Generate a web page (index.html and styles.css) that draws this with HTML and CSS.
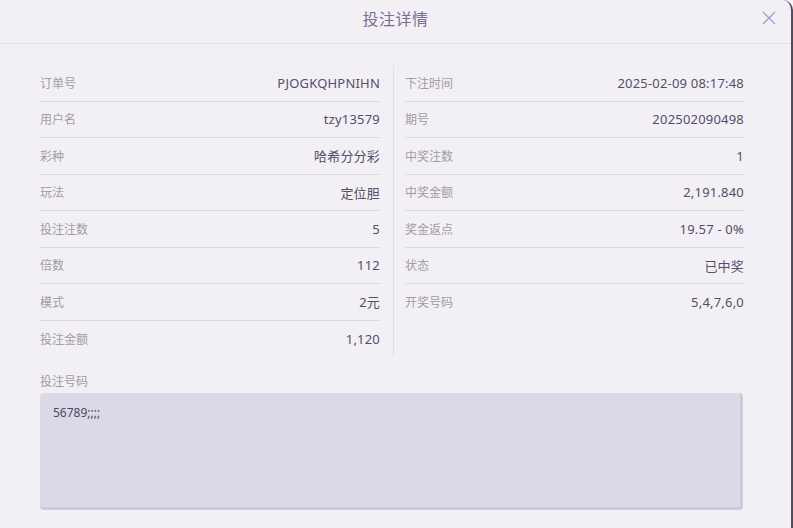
FILE: index.html
```
<!DOCTYPE html>
<html>
	<head>
		<meta charset="UTF-8">
		<title>投注详情</title>
		<link rel="stylesheet" href="styles.css">
	</head>
	<body>
		<div class="modal">
			<div class="modal-head">
				<span class="modal-title">投注详情</span>
				<a href="javascript:;" class="modal-close">
					<svg width="14" height="14" viewBox="0 0 14 14"><path d="M1 1L13 13M13 1L1 13" stroke="#a197cc" stroke-width="1.2" fill="none"/></svg>
				</a>
			</div>
			<div class="modal-body">
				<div class="detail">
					<div class="col col-left">
						<div class="row"><span class="label">订单号</span><span class="value">PJOGKQHPNIHN</span></div>
						<div class="row"><span class="label">用户名</span><span class="value">tzy13579</span></div>
						<div class="row"><span class="label">彩种</span><span class="value">哈希分分彩</span></div>
						<div class="row"><span class="label">玩法</span><span class="value">定位胆</span></div>
						<div class="row"><span class="label">投注注数</span><span class="value">5</span></div>
						<div class="row"><span class="label">倍数</span><span class="value">112</span></div>
						<div class="row"><span class="label">模式</span><span class="value">2元</span></div>
						<div class="row"><span class="label">投注金额</span><span class="value">1,120</span></div>
					</div>
					<div class="col col-right">
						<div class="row"><span class="label">下注时间</span><span class="value">2025-02-09 08:17:48</span></div>
						<div class="row"><span class="label">期号</span><span class="value">202502090498</span></div>
						<div class="row"><span class="label">中奖注数</span><span class="value">1</span></div>
						<div class="row"><span class="label">中奖金额</span><span class="value">2,191.840</span></div>
						<div class="row"><span class="label">奖金返点</span><span class="value">19.57 - 0%</span></div>
						<div class="row"><span class="label">状态</span><span class="value">已中奖</span></div>
						<div class="row"><span class="label">开奖号码</span><span class="value">5,4,7,6,0</span></div>
					</div>
				</div>
				<div class="numbers-label">投注号码</div>
				<div class="numbers-box">56789;;;;</div>
			</div>
		</div>
	</body>
</html>
```

FILE: styles.css
```
* {
	box-sizing: border-box;
}

body {
	margin: 0;
	background: #f6f4f7;
	font-family: "Noto Sans", "Noto Sans CJK SC", sans-serif;
}

.modal {
	position: relative;
	width: 793px;
	height: 528px;
	background: #f3f0f5;
	border-right: 2px solid #544b5e;
	border-top-right-radius: 10px;
	overflow: hidden;
}

.modal-head {
	position: relative;
	height: 44px;
	padding-bottom: 7px;
	border-bottom: 1px solid #e3dfe7;
	display: flex;
	align-items: center;
	justify-content: center;
}

.modal-title {
	font-size: 16px;
	color: #7a6e93;
	letter-spacing: 0.5px;
}

.modal-close {
	position: absolute;
	right: 15px;
	top: 11px;
	display: block;
	width: 14px;
	height: 14px;
}

.modal-close svg {
	display: block;
}

.modal-body {
	padding: 21px 0 0 40px;
}

.detail {
	display: flex;
}

.col-left {
	width: 340px;
	margin-right: 13px;
}

.col-right {
	width: 351px;
	border-left: 1px solid #e3dfe7;
	padding-left: 11px;
}

.row {
	height: 36.5px;
	display: flex;
	align-items: center;
	justify-content: space-between;
	border-bottom: 1px solid #dcd8e1;
}

.col .row:last-child {
	border-bottom: none;
}

.label {
	font-size: 12px;
	color: #a19ba9;
}

.value {
	font-size: 13px;
	color: #534e69;
	letter-spacing: 0.2px;
}

.numbers-label {
	margin-top: 17px;
	font-size: 12px;
	line-height: 16px;
	color: #a19ba9;
}

.numbers-box {
	margin-top: 3px;
	width: 703px;
	height: 117px;
	padding: 12px 13px;
	background: #dcd8e7;
	border-radius: 4px;
	border-right: 3px solid #cec9db;
	border-bottom: 3px solid #cec9db;
	font-size: 12px;
	line-height: 16px;
	color: #4d4864;
}
```
